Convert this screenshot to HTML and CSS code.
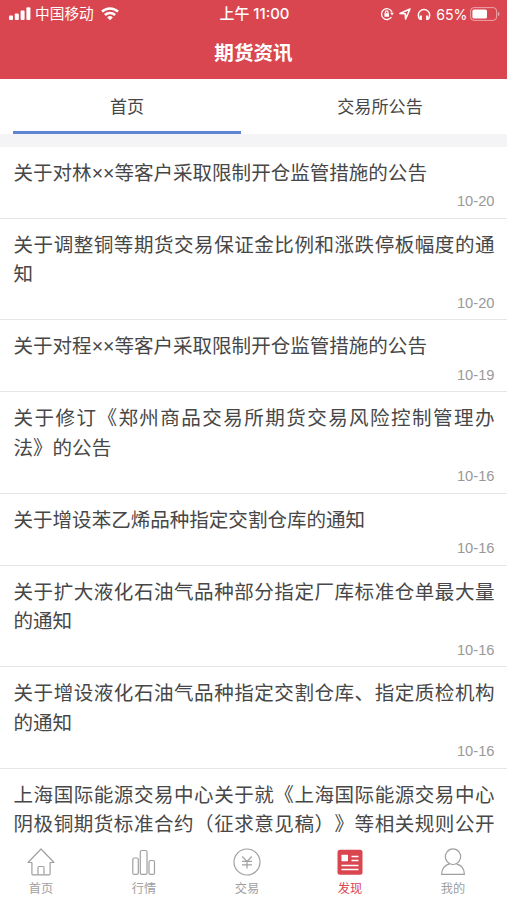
FILE: index.html
```html
<!DOCTYPE html>
<html lang="zh-CN">
  <head>
    <meta charset="UTF-8" />
    <meta name="viewport" content="width=device-width, initial-scale=1.0" />
    <title>期货资讯</title>
    <link rel="stylesheet" href="styles.css">
  </head>
  <body>
    <header class="header">
      <div class="status-bar">
        <div class="status-left">
          <svg width="22" height="14" viewBox="0 0 22 14" fill="currentColor">
            <rect x="0" y="8.6" width="4" height="4.4" rx="1" />
            <rect x="5.8" y="6.4" width="4" height="6.6" rx="1" />
            <rect x="11.6" y="3.4" width="4" height="9.6" rx="1" />
            <rect x="17.4" y="0.2" width="4" height="12.8" rx="1" />
          </svg>
          <span class="carrier">中国移动</span>
          <svg width="18" height="14" viewBox="0 0 18 14" fill="none" stroke="currentColor" stroke-width="2.5">
            <path d="M1 4.6a11.6 11.6 0 0 1 16 0" />
            <path d="M3.9 8a7.4 7.4 0 0 1 10.2 0" />
            <path d="M9 13.3l-2.8-2.9a4 4 0 0 1 5.6 0z" fill="currentColor" stroke="none" />
          </svg>
        </div>
        <div class="clock">上午 11:00</div>
        <div class="status-right">
          <svg width="14" height="14" viewBox="0 0 14 14" fill="none" stroke="currentColor" stroke-width="1.3">
            <path d="M11.4 10.2A5.4 5.4 0 1 1 12 5.2" />
            <path d="M10.2 5.7h3.6L12 8.5z" fill="currentColor" stroke="none" />
            <rect x="4.4" y="6.3" width="4.6" height="3.5" rx="0.5" fill="currentColor" stroke="none" />
            <path d="M5.4 6.5V5.2a1.3 1.3 0 0 1 2.6 0v1.3" />
          </svg>
          <svg width="12" height="12" viewBox="0 0 12 12" fill="none" stroke="currentColor" stroke-width="1.6" stroke-linejoin="round">
            <path d="M1 5.5L11 1 6.6 11 6.3 5.8z" />
          </svg>
          <svg width="14" height="13" viewBox="0 0 14 13" fill="none" stroke="currentColor" stroke-width="1.4">
            <path d="M2.9 11.2A5.6 5.6 0 0 1 1.3 7.2a5.7 5.7 0 0 1 11.4 0 5.6 5.6 0 0 1-1.6 4" />
            <path d="M3.8 7.6v4.4M10.2 7.6v4.4" stroke-width="2.2" />
          </svg>
          <span class="percent">65%</span>
          <svg class="battery" width="30" height="14" viewBox="0 0 30 14">
            <rect x="0.6" y="0.6" width="26" height="12.8" rx="3.4" fill="none" stroke="currentColor" stroke-width="1" opacity="0.5" />
            <rect x="2.4" y="2.5" width="14.6" height="9" rx="1.6" fill="currentColor" />
            <path d="M27.8 4.8q1.8 0.7 1.8 2.2t-1.8 2.2z" fill="currentColor" opacity="0.5" />
          </svg>
        </div>
      </div>
      <h1 class="title">期货资讯</h1>
    </header>

    <nav class="tabs">
      <a class="tab active">首页</a>
      <a class="tab">交易所公告</a>
    </nav>

    <main class="news-list">
      <article class="news-item">
        <h2>关于对林××等客户采取限制开仓监管措施的公告</h2>
        <time>10-20</time>
      </article>
      <article class="news-item">
        <h2>关于调整铜等期货交易保证金比例和涨跌停板幅度的通知</h2>
        <time>10-20</time>
      </article>
      <article class="news-item">
        <h2>关于对程××等客户采取限制开仓监管措施的公告</h2>
        <time>10-19</time>
      </article>
      <article class="news-item">
        <h2>关于修订《郑州商品交易所期货交易风险控制管理办法》的公告</h2>
        <time>10-16</time>
      </article>
      <article class="news-item">
        <h2>关于增设苯乙烯品种指定交割仓库的通知</h2>
        <time>10-16</time>
      </article>
      <article class="news-item">
        <h2>关于扩大液化石油气品种部分指定厂库标准仓单最大量的通知</h2>
        <time>10-16</time>
      </article>
      <article class="news-item">
        <h2>关于增设液化石油气品种指定交割仓库、指定质检机构的通知</h2>
        <time>10-16</time>
      </article>
      <article class="news-item partial">
        <h2>上海国际能源交易中心关于就《上海国际能源交易中心阴极铜期货标准合约（征求意见稿）》等相关规则公开</h2>
      </article>
    </main>

    <footer class="tab-bar">
      <a class="bar-item">
        <svg width="28" height="28" viewBox="0 0 28 28" fill="none" stroke="currentColor" stroke-width="1.2" stroke-linejoin="round">
          <path d="M14 1L1 14.5h3.9v11.3q0 1 1 1h16.2q1 0 1-1V14.5H27z" />
          <path d="M11 26.5v-7q0-1 1-1h4q1 0 1 1v7" />
        </svg>
        <span>首页</span>
      </a>
      <a class="bar-item">
        <svg width="28" height="28" viewBox="0 0 28 28" fill="none" stroke="currentColor" stroke-width="1.2">
          <rect x="2.8" y="10" width="5.5" height="16.4" rx="1.5" />
          <rect x="10.3" y="2.5" width="6.7" height="23.9" rx="1.5" />
          <rect x="19" y="12.5" width="5.5" height="13.9" rx="1.5" />
        </svg>
        <span>行情</span>
      </a>
      <a class="bar-item">
        <svg width="28" height="28" viewBox="0 0 28 28" fill="none" stroke="currentColor" stroke-width="1.2">
          <circle cx="14" cy="14" r="13" />
          <path d="M9.3 8.5l4.7 4.8 4.7-4.8M14 13v7.5M9 13.3h10M9 16.8h10" />
        </svg>
        <span>交易</span>
      </a>
      <a class="bar-item active">
        <svg width="28" height="28" viewBox="0 0 28 28">
          <rect x="1.5" y="1.7" width="25" height="25" rx="2.5" fill="currentColor" />
          <rect x="5.5" y="6.7" width="6.5" height="6.5" rx="0.5" fill="#fff" />
          <path d="M15.5 8.5h7M15.5 12.5h7M5.5 17.5h17M5.5 21.5h17" stroke="#fff" stroke-width="1.3" />
        </svg>
        <span>发现</span>
      </a>
      <a class="bar-item">
        <svg width="28" height="28" viewBox="0 0 28 28" fill="none" stroke="currentColor" stroke-width="1.2" stroke-linejoin="round">
          <path d="M10.5 15.5A7.7 7.7 0 1 1 17.5 15.5Q14 17.5 10.5 15.5" />
          <path d="M10.5 15.8C5.5 17.2 2.6 21 2.6 26.4h22.8c0-5.4-2.9-9.2-7.9-10.6" />
        </svg>
        <span>我的</span>
      </a>
    </footer>
  </body>
</html>
```
FILE: styles.css
```css
:root {
  --primary: #d9464f;
  --accent: #5f85d2;
  --text: #474747;
  --muted: #999999;
  --line: #e6e6e8;
}

* {
  margin: 0;
  padding: 0;
  box-sizing: border-box;
}

body {
  height: 100vh;
  display: flex;
  flex-direction: column;
  overflow: hidden;
  background: #ffffff;
  color: var(--text);
  font-family: "Liberation Sans", "Noto Sans CJK SC", sans-serif;
  text-spacing-trim: space-all;
}

svg {
  display: block;
  flex: none;
}

.header {
  height: 79px;
  flex: none;
  background: var(--primary);
  color: #ffffff;
}

.status-bar {
  height: 27px;
  padding: 0 7px 0 9px;
  display: grid;
  grid-template-columns: 1fr auto 1fr;
  align-items: center;
  font-size: 14.7px;
  line-height: 27px;
}

.status-left,
.status-right {
  display: flex;
  align-items: center;
}

.status-right {
  justify-content: flex-end;
  gap: 5.5px;
}

.carrier {
  margin: 0 7px 0 4px;
  padding-top: 1px;
}

.clock {
  font-family: Inter, "Noto Sans CJK SC", sans-serif;
  font-size: 14.9px;
  font-weight: 500;
}

.clock,
.percent {
  padding-top: 1px;
}

.percent {
  font-family: Inter, sans-serif;
  font-size: 14.2px;
}

.battery {
  margin-left: -3px;
}

.title {
  font-size: 19.6px;
  font-weight: 700;
  line-height: 52px;
  text-align: center;
}

.tabs {
  height: 68px;
  flex: none;
  display: flex;
  padding: 0 13px;
  border-bottom: 13px solid #f4f4f7;
}

.tab {
  flex: 1;
  font-size: 17.1px;
  line-height: 57px;
  text-align: center;
}

.tab + .tab {
  margin-left: 25px;
}

.tab.active {
  border-bottom: 3px solid var(--accent);
}

.news-list {
  flex: 1;
  overflow: hidden;
}

.news-item {
  padding: 12px 12.5px 4.6px 13.5px;
  border-bottom: 1px solid var(--line);
}

.news-item h2 {
  font-size: 19.55px;
  font-weight: 400;
  line-height: 29.4px;
  text-align: justify;
}

.news-item.partial {
  border-bottom: none;
}

.news-item.partial h2 {
  text-align-last: justify;
}

.news-item time {
  display: block;
  padding-top: 2px;
  color: var(--muted);
  font-size: 14.7px;
  line-height: 23px;
  text-align: right;
}

.tab-bar {
  height: 59px;
  flex: none;
  display: flex;
  justify-content: space-between;
  padding: 7px 34px 0 21px;
  background: #ffffff;
}

.bar-item {
  width: 40px;
  display: flex;
  flex-direction: column;
  align-items: center;
  color: #a0a0a0;
  font-size: 12.2px;
  line-height: 18px;
}

.bar-item span {
  margin-top: 4px;
}

.bar-item.active {
  color: var(--primary);
}
```
